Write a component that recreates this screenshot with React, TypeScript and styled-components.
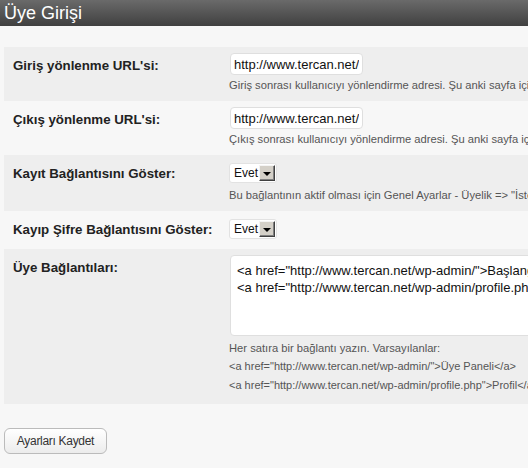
import React from "react";
import styled, { createGlobalStyle } from "styled-components";

const GlobalStyle = createGlobalStyle`
  html, body {
    margin: 0;
    padding: 0;
    overflow: hidden;
    background: #f7f7f7;
  }
  body {
    font-family: "Liberation Sans", Arial, sans-serif;
    color: #222;
  }
`;

const Page = styled.div`
  width: 528px;
  height: 468px;
  overflow: hidden;
`;

const Header = styled.h2`
  margin: 0;
  height: 26px;
  padding: 0 4px;
  display: flex;
  align-items: center;
  background: linear-gradient(#6a6a6a, #404040);
  color: #fff;
  font-size: 18px;
  font-weight: normal;
  white-space: nowrap;
`;

const FormTable = styled.div`
  margin: 21px 0 0 4px;
  width: 900px;
  display: flex;
  flex-direction: column;
`;

const Row = styled.div<{ $shaded?: boolean }>`
  display: grid;
  grid-template-columns: 215px 1fr;
  background: ${(p) => (p.$shaded ? "#eeeeee" : "transparent")};
`;

const Label = styled.div`
  padding: 11px 9px;
  font-size: 13.3px;
  line-height: 16px;
  font-weight: bold;
  color: #222;
  white-space: nowrap;
`;

const Field = styled.div`
  padding: 6px 10px 9px;
  display: flex;
  flex-direction: column;
  align-items: flex-start;
`;

const TextInput = styled.input`
  box-sizing: border-box;
  width: 133px;
  height: 22px;
  margin: 0 0 0 1px;
  padding: 0 3px;
  border: 1px solid #dfdfdf;
  border-radius: 4px;
  background: #fff;
  font-family: "Liberation Sans", Arial, sans-serif;
  font-size: 13px;
  color: #111;
  outline: none;
`;

const Description = styled.div<{ $gap?: number }>`
  margin-top: ${(p) => p.$gap ?? 3}px;
  font-size: 11.2px;
  line-height: 14px;
  color: #555;
  white-space: nowrap;
`;

const CodeList = styled.div`
  margin-top: 2px;
  display: flex;
  flex-direction: column;
`;

const Code = styled.div`
  font-size: 11px;
  line-height: 19px;
  color: #555;
  white-space: nowrap;
`;

const SelectBox = styled.div`
  box-sizing: border-box;
  margin: 2px 0 0 0;
  height: 20px;
  width: 48px;
  display: flex;
  align-items: center;
  justify-content: space-between;
  padding: 0 1px 0 4px;
  background: #fff;
  border: 1px solid #e2e2e2;
  border-radius: 3px;
  font-size: 12px;
  color: #111;
`;

const ArrowButton = styled.span`
  box-sizing: border-box;
  width: 16px;
  height: 16px;
  display: flex;
  align-items: center;
  justify-content: center;
  background: #d4d0c8;
  border: 1px solid;
  border-color: #f4f4f4 #404040 #404040 #f4f4f4;
  box-shadow: inset -1px -1px 0 #808080;

  &::after {
    content: "";
    width: 0;
    height: 0;
    border-left: 4px solid transparent;
    border-right: 4px solid transparent;
    border-top: 4px solid #000;
    margin-top: 1px;
  }
`;

const TextArea = styled.textarea`
  box-sizing: border-box;
  width: 520px;
  height: 81px;
  margin: 0 0 0 1px;
  padding: 6px 6px;
  border: 1px solid #dfdfdf;
  border-radius: 4px;
  background: #fff;
  font-family: "Liberation Sans", Arial, sans-serif;
  font-size: 13px;
  line-height: 17px;
  color: #111;
  resize: none;
  overflow: hidden;
  white-space: pre;
  outline: none;
`;

const Footer = styled.div`
  padding: 24px 4px 0;
`;

const SaveButton = styled.button`
  box-sizing: border-box;
  width: 103px;
  height: 26px;
  padding: 0;
  border: 1px solid #bbb;
  border-radius: 6px;
  background: linear-gradient(#ffffff, #ececec);
  font-family: "Liberation Sans", Arial, sans-serif;
  font-size: 12px;
  letter-spacing: -0.3px;
  color: #333;
  cursor: pointer;
`;

const Select: React.FC<{ value: string }> = ({ value }) => (
  <SelectBox>
    <span>{value}</span>
    <ArrowButton />
  </SelectBox>
);

const links =
  '<a href="http://www.tercan.net/wp-admin/">Başlangıç</a>\n<a href="http://www.tercan.net/wp-admin/profile.php">Profil</a>';

export default function App() {
  return (
    <Page>
      <GlobalStyle />
      <Header>Üye Girişi</Header>
      <FormTable>
        <Row $shaded>
          <Label>Giriş yönlenme URL'si:</Label>
          <Field>
            <TextInput defaultValue="http://www.tercan.net/" />
            <Description>
              Giriş sonrası kullanıcıyı yönlendirme adresi. Şu anki sayfa için boş bırakın.
            </Description>
          </Field>
        </Row>
        <Row>
          <Label>Çıkış yönlenme URL'si:</Label>
          <Field>
            <TextInput defaultValue="http://www.tercan.net/" />
            <Description>
              Çıkış sonrası kullanıcıyı yönlendirme adresi. Şu anki sayfa için boş bırakın.
            </Description>
          </Field>
        </Row>
        <Row $shaded>
          <Label>Kayıt Bağlantısını Göster:</Label>
          <Field>
            <Select value="Evet" />
            <Description $gap={5}>
              Bu bağlantının aktif olması için Genel Ayarlar - Üyelik =&gt; "İsteyen herkes kayıt olabilir" seçili olmalıdır.
            </Description>
          </Field>
        </Row>
        <Row>
          <Label>Kayıp Şifre Bağlantısını Göster:</Label>
          <Field>
            <Select value="Evet" />
          </Field>
        </Row>
        <Row $shaded>
          <Label>Üye Bağlantıları:</Label>
          <Field>
            <TextArea defaultValue={links} wrap="off" />
            <Description $gap={5}>Her satıra bir bağlantı yazın. Varsayılanlar:</Description>
            <CodeList>
              <Code>&lt;a href="http://www.tercan.net/wp-admin/"&gt;Üye Paneli&lt;/a&gt;</Code>
              <Code>&lt;a href="http://www.tercan.net/wp-admin/profile.php"&gt;Profil&lt;/a&gt;</Code>
            </CodeList>
          </Field>
        </Row>
      </FormTable>
      <Footer>
        <SaveButton type="button">Ayarları Kaydet</SaveButton>
      </Footer>
    </Page>
  );
}
